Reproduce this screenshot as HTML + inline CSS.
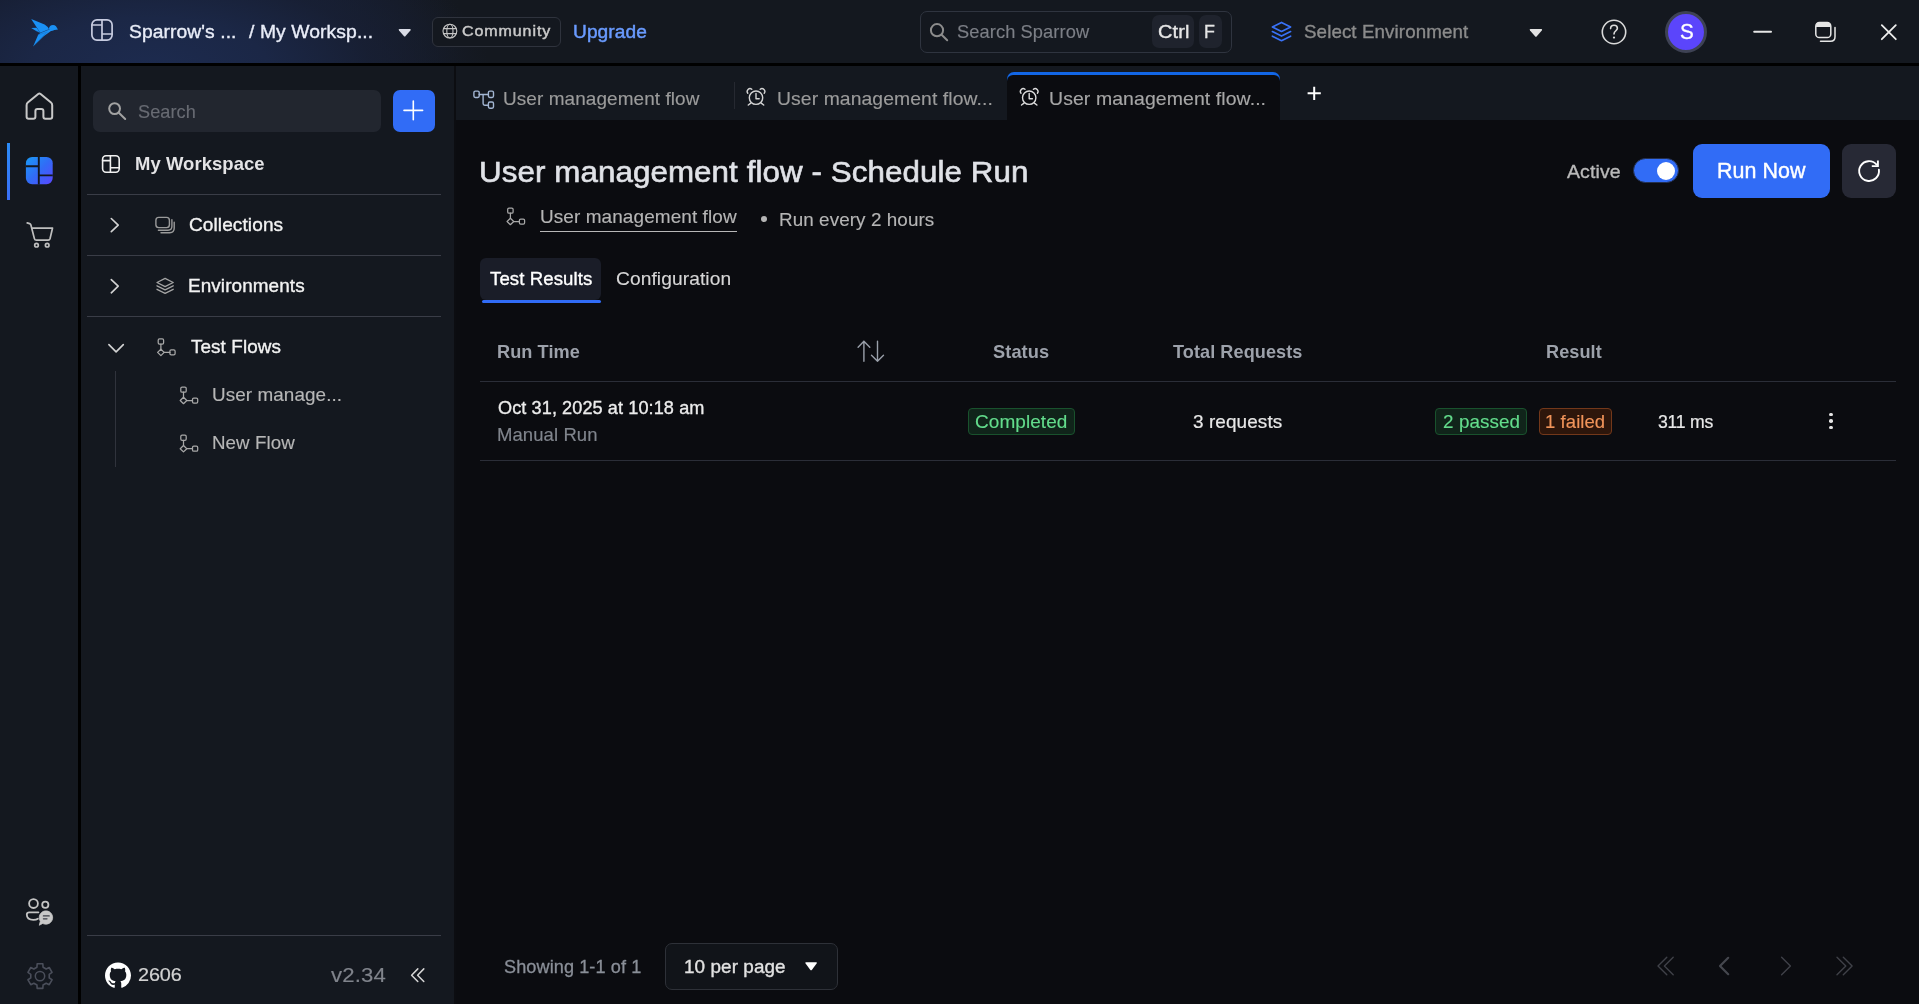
<!DOCTYPE html>
<html lang="en">
<head>
<meta charset="utf-8">
<title>Sparrow - User management flow - Schedule Run</title>
<style>
  html, body { margin: 0; padding: 0; }
  body {
    width: 1919px; height: 1004px; overflow: hidden; position: relative;
    background: #0b0c10;
    font-family: "Liberation Sans", sans-serif;
  }
  .abs { position: absolute; }
  .t {
    position: absolute; white-space: pre; line-height: 24px;
    font-family: "Liberation Sans", sans-serif; font-weight: 400;
  }
  svg { position: absolute; overflow: visible; }
  .ln { position: absolute; height: 1px; background: #3a3d47; }
</style>
</head>
<body>

<!-- ======= HEADER ======= -->
<div class="abs" id="header" style="left:0;top:0;width:1919px;height:63px;background:
  radial-gradient(ellipse 340px 150px at 150px 70px,#1d2b4f 0%,#1b2746 35%,rgba(24,32,54,0.75) 65%,rgba(20,24,31,0) 100%),
  linear-gradient(90deg,#151d33 0px,#161f36 120px,#161c2c 330px,#14181f 460px,#14181f 100%);"></div>
<div class="abs" style="left:0;top:63px;width:1919px;height:3px;background:#000"></div>

<!-- community badge -->
<div class="abs" style="left:432px;top:17px;width:127px;height:28px;border:1px solid #2f333d;border-radius:6px;background:#14181f"></div>
<!-- header search -->
<div class="abs" style="left:920px;top:11px;width:310px;height:40px;border:1px solid #2f343f;border-radius:7px;"></div>
<div class="abs" style="left:1152px;top:15px;width:42px;height:33px;border-radius:7px;background:#1f232d"></div>
<div class="abs" style="left:1199px;top:15px;width:23px;height:33px;border-radius:7px;background:#1f232d"></div>
<!-- avatar -->
<div class="abs" style="left:1665px;top:11px;width:36px;height:36px;border:3px solid #3e4254;border-radius:50%;background:#5b45fb"></div>

<!-- ======= LEFT NAV ======= -->
<div class="abs" id="nav" style="left:0;top:66px;width:78px;height:938px;background:#14181f"></div>
<div class="abs" style="left:78px;top:66px;width:3px;height:938px;background:#000"></div>
<div class="abs" style="left:7px;top:143px;width:3px;height:57px;background:linear-gradient(180deg,#2b8cf8,#3a6ff8)"></div>

<!-- ======= SIDEBAR ======= -->
<div class="abs" id="sidebar" style="left:81px;top:66px;width:373px;height:938px;background:#14181f"></div>
<div class="abs" style="left:454px;top:66px;width:2px;height:938px;background:#0c0d11"></div>
<div class="abs" style="left:93px;top:90px;width:288px;height:42px;border-radius:7px;background:#22262f"></div>
<div class="abs" style="left:393px;top:90px;width:42px;height:42px;border-radius:7px;background:#316cf6"></div>
<div class="ln" style="left:87px;top:194px;width:354px"></div>
<div class="ln" style="left:87px;top:255px;width:354px"></div>
<div class="ln" style="left:87px;top:316px;width:354px"></div>
<div class="ln" style="left:87px;top:935px;width:354px"></div>
<div class="abs" style="left:115px;top:371px;width:1px;height:96px;background:#30333c"></div>

<!-- ======= TAB BAR ======= -->
<div class="abs" id="tabbar" style="left:456px;top:66px;width:1463px;height:54px;background:#14181f"></div>
<div class="abs" style="left:734px;top:82px;width:1px;height:27px;background:#262931"></div>
<div class="abs" style="left:1007px;top:72px;width:273px;height:48px;border-radius:7px 7px 0 0;background:#1266e6"></div>
<div class="abs" style="left:1007px;top:75px;width:273px;height:45px;border-radius:6px 6px 0 0;background:#0b0c10"></div>

<!-- ======= MAIN ======= -->
<!-- sub-tabs -->
<div class="abs" style="left:480px;top:258px;width:121px;height:42px;border-radius:6px;background:#1a1d28"></div>
<div class="abs" style="left:482px;top:300px;width:119px;height:3px;border-radius:2px;background:#316cf6"></div>
<!-- underline of link -->
<div class="abs" style="left:540px;top:231px;width:197px;height:1px;background:#b8b8b8"></div>
<!-- bullet -->
<div class="abs" style="left:760.8px;top:215.9px;width:6px;height:6px;border-radius:50%;background:#b5b5b5"></div>
<!-- toggle -->
<div class="abs" style="left:1632.5px;top:158.3px;width:44px;height:23px;border:1px solid #24304f;border-radius:13px;background:#316cf6"></div>
<div class="abs" style="left:1657px;top:161.7px;width:18.4px;height:18.4px;border-radius:50%;background:#ffffff"></div>
<!-- run now -->
<div class="abs" style="left:1693px;top:144px;width:137px;height:54px;border-radius:9px;background:#316cf6"></div>
<div class="abs" style="left:1842px;top:144px;width:54px;height:54px;border-radius:9px;background:#272935"></div>

<!-- table lines -->
<div class="ln" style="left:480px;top:381px;width:1416px;background:#2b2e38"></div>
<div class="ln" style="left:480px;top:460px;width:1416px;background:#2b2e38"></div>
<!-- badges -->
<div class="abs" style="left:968px;top:408px;width:105px;height:25px;border:1px solid #19522d;border-radius:4px;background:#10241a"></div>
<div class="abs" style="left:1435px;top:408px;width:90px;height:25px;border:1px solid #19522d;border-radius:4px;background:#10241a"></div>
<div class="abs" style="left:1539px;top:408px;width:71px;height:25px;border:1px solid #73381a;border-radius:4px;background:#2d160b"></div>
<!-- kebab -->
<div class="abs" style="left:1829.3px;top:412.8px;width:3.6px;height:3.6px;border-radius:50%;background:#e6e6e6"></div>
<div class="abs" style="left:1829.3px;top:419.2px;width:3.6px;height:3.6px;border-radius:50%;background:#e6e6e6"></div>
<div class="abs" style="left:1829.3px;top:425.6px;width:3.6px;height:3.6px;border-radius:50%;background:#e6e6e6"></div>

<!-- footer dropdown -->
<div class="abs" style="left:665px;top:943px;width:171px;height:45px;border:1px solid #2e3138;border-radius:7px;background:#111419"></div>

<!--ICONS_START-->
<svg id="icons" width="1919" height="1004" viewBox="0 0 1919 1004" style="left:0;top:0" fill="none" stroke-linecap="round" stroke-linejoin="round">

<!-- ===== header: bird logo ===== -->
<g fill="#1a90f4" stroke="none">
  <path d="M31.2 19.1 L44.6 24.5 Q47.5 26.3 49.1 29.2 L40.2 32.7 Z"/>
  <path d="M31.2 28.0 L36.6 27.7 L40.2 32.8 L35.7 30.8 Z"/>
  <path d="M48.9 29.2 C48.9 26.4 50.8 24.9 53.0 24.9 C55.4 24.9 56.6 26.6 57.0 27.9 L58.0 29.4 L54.5 29.9 L51.0 30.7 Z"/>
  <path d="M55.0 29.8 L51.0 30.9 L44.0 35.9 L33.1 46.6 L38.2 34.8 L40.4 33.0 L49.1 29.4 Z"/>
</g>
<g stroke="#1568bd" stroke-width="0.5" opacity="0.75">
  <path d="M40.4 33.0 L49.1 29.4 M38.2 34.8 L47 32.2 M34.5 44.5 L45.5 33.6 M36.2 30.9 L40.2 32.8"/>
</g>

<!-- ===== header: workspace icon ===== -->
<g stroke="#c7cce0" stroke-width="1.7">
  <rect x="91.9" y="19.9" width="20.2" height="20.2" rx="5"/>
  <path d="M102 19.9 V40.1 M91.9 25 H102 M102 34 H112.1"/>
</g>
<!-- caret -->
<path d="M399.6 29 H409.8 Q411.4 29 410.4 30.4 L405.6 36 Q404.7 37 403.8 36 L399 30.4 Q398 29 399.6 29 Z" fill="#d9dce6" stroke="none"/>

<!-- globe -->
<g stroke="#c4c4c4" stroke-width="1.15">
  <circle cx="449.9" cy="31.1" r="6.9"/>
  <ellipse cx="449.9" cy="31.1" rx="3.1" ry="6.9"/>
  <path d="M443.6 28.6 H456.2 M443.6 33.6 H456.2"/>
</g>

<!-- header search icon -->
<g stroke="#8c8c8c" stroke-width="2">
  <circle cx="937" cy="30.2" r="6.1"/>
  <path d="M941.6 34.8 L947.2 40.2"/>
</g>

<!-- env layers (blue) -->
<g stroke="#3972f7" stroke-width="1.7">
  <path d="M1281.5 22.4 L1290.6 26.9 L1281.5 31.4 L1272.4 26.9 Z"/>
  <path d="M1272.4 31.6 L1281.5 36.1 L1290.6 31.6"/>
  <path d="M1272.4 36.2 L1281.5 40.7 L1290.6 36.2"/>
</g>
<!-- env caret -->
<path d="M1530.6 29 H1541.2 Q1542.8 29 1541.8 30.4 L1536.8 36.2 Q1535.9 37.2 1535 36.2 L1530 30.4 Q1529 29 1530.6 29 Z" fill="#e2e2e2" stroke="none"/>

<!-- help -->
<g stroke="#dadada" stroke-width="1.6">
  <circle cx="1614" cy="32" r="11.7"/>
  <path d="M1610.6 28.6 C1610.6 26.4 1612.2 25.2 1614 25.2 C1615.9 25.2 1617.4 26.5 1617.4 28.3 C1617.4 30.6 1614 31 1614 33.9"/>
</g>
<circle cx="1614" cy="37.6" r="1.1" fill="#dadada"/>

<!-- window controls -->
<path d="M1754.2 31.8 H1771" stroke="#e6e6e6" stroke-width="2"/>
<g stroke="#e6e6e6" stroke-width="1.5">
  <path d="M1820.5 41.2 H1830.5 Q1835 41.2 1835 36.7 V27.5"/>
  <rect x="1815.8" y="22.6" width="15" height="15" rx="3.6"/>
</g>
<path d="M1816 27 V26 Q1816 22.6 1819.4 22.6 H1827.2 Q1830.8 22.6 1830.8 26 V27 Z" fill="#e6e6e6" stroke="none"/>
<path d="M1881.8 25.2 L1895.8 39.2 M1895.8 25.2 L1881.8 39.2" stroke="#ededed" stroke-width="1.8"/>
<!-- ===== left nav ===== -->
<defs>
  <linearGradient id="wsg" x1="0" y1="0" x2="1" y2="1">
    <stop offset="0" stop-color="#1a9af6"/><stop offset="0.5" stop-color="#316cf6"/><stop offset="1" stop-color="#5a46ff"/>
  </linearGradient>
</defs>
<!-- home -->
<path d="M38.2 94.0 Q39.4 93.0 40.6 94.0 L51.0 102.6 Q52.2 103.6 52.2 105.2 V116.7 Q52.2 118.7 50.2 118.7 H45.4 Q43.4 118.7 43.4 116.7 V110.9 Q43.4 108.9 41.4 108.9 H37.4 Q35.4 108.9 35.4 110.9 V116.7 Q35.4 118.7 33.4 118.7 H28.6 Q26.6 118.7 26.6 116.7 V105.2 Q26.6 103.6 27.8 102.6 Z" stroke="#c8c8c8" stroke-width="2"/>
<!-- workspace (active) -->
<rect x="25.9" y="157" width="26.8" height="27.3" rx="6.2" fill="url(#wsg)" stroke="none"/>
<path d="M38.8 157 V184.4 M25.9 166.2 H38.8 M38.8 175.4 H52.8" stroke="#14181f" stroke-width="1.9" stroke-linecap="butt"/>
<!-- cart -->
<g stroke="#bebebe" stroke-width="1.7">
  <path d="M27.2 222.9 L29.6 223.6 Q30.6 223.9 30.9 225 L34.4 238.6 Q34.8 240.2 36.4 240.2 H48.2 Q49.6 240.2 50 238.8 L52.5 228.2 H31.7"/>
  <circle cx="36.5" cy="245.2" r="1.8"/>
  <circle cx="47.2" cy="245.2" r="1.8"/>
</g>
<!-- people + chat -->
<g stroke="#c4c4c4" stroke-width="1.8">
  <circle cx="33.5" cy="903.6" r="4.4"/>
  <circle cx="45.3" cy="904.8" r="3.1"/>
  <path d="M38.4 912.3 H29.4 Q26.8 912.3 26.8 914.6 Q26.8 919.9 33.4 919.9 Q36.4 919.9 37.9 918.8"/>
</g>
<path d="M39.4 924.9 L40.3 921.2 A6.7 6.7 0 1 1 43.0 923.6 Z" fill="#c8c8c8" stroke="#c8c8c8" stroke-width="0.8"/>
<path d="M43.4 915.9 H49.2 M43.4 918.8 H47.0" stroke="#3a3d45" stroke-width="1.3"/>
<!-- settings gear -->
<path d="M36.94 967.21 L37.17 963.82 L42.83 963.82 L43.06 967.21 L46.17 969.01 L49.22 967.51 L52.05 972.42 L49.23 974.31 L49.23 977.89 L52.05 979.78 L49.22 984.69 L46.17 983.19 L43.06 984.99 L42.83 988.38 L37.17 988.38 L36.94 984.99 L33.83 983.19 L30.78 984.69 L27.95 979.78 L30.77 977.89 L30.77 974.31 L27.95 972.42 L30.78 967.51 L33.83 969.01 Z" stroke="#4a4e5a" stroke-width="1.6"/>
<circle cx="40" cy="976.1" r="4.7" stroke="#4a4e5a" stroke-width="1.5"/>

<!-- ===== sidebar ===== -->
<!-- search icon -->
<g stroke="#a2a2a2" stroke-width="2">
  <circle cx="114.6" cy="108.6" r="5.4"/>
  <path d="M118.8 112.8 L125.2 119"/>
</g>
<!-- plus -->
<path d="M404 110.4 H422.6 M413.3 101.1 V119.7" stroke="#ffffff" stroke-width="1.6"/>
<!-- my workspace icon -->
<g stroke="#f0f0f0" stroke-width="1.6">
  <rect x="102.6" y="155.8" width="16.6" height="16.4" rx="3.4"/>
  <path d="M110.4 155.8 V172.2 M102.6 160.6 H110.4 M110.4 167.8 H119.2"/>
</g>
<!-- chevrons -->
<g stroke="#d2d2d2" stroke-width="1.65">
  <path d="M111.3 218.5 L118.2 225.1 L111.3 231.7"/>
  <path d="M111.3 279.6 L118.2 286.2 L111.3 292.8"/>
  <path d="M108.9 344.6 L116.1 351.8 L123.3 344.6"/>
</g>
<!-- collections icon -->
<g stroke="#9a9a9a" stroke-width="1.4">
  <rect x="155.9" y="217.4" width="13.5" height="10.2" rx="2.8"/>
  <path d="M158.4 230.2 H168.0 Q171.9 230.2 171.9 226.3 V219.6"/>
  <path d="M161 232.7 H169.8 Q174.2 232.7 174.2 228.3 V222.2"/>
</g>
<!-- environments icon -->
<g stroke="#a4a4a4" stroke-width="1.3">
  <path d="M165.1 278.4 L173.2 282.5 L165.1 286.6 L157 282.5 Z"/>
  <path d="M157 285.8 L165.1 289.9 L173.2 285.8"/>
  <path d="M157 289.3 L165.1 293.4 L173.2 289.3"/>
</g>
<!-- ===== flow icon (reused) ===== -->
<defs>
  <g id="flow" stroke-width="1.25">
    <rect x="0.9" y="0.6" width="5.4" height="5.2" rx="1.3"/>
    <path d="M3.6 5.8 V10.9"/>
    <path d="M3.6 10.9 L6.9 14.1 L3.6 17.3 L0.3 14.1 Z"/>
    <path d="M6.9 14.1 H12.6"/>
    <rect x="12.6" y="11.6" width="5.2" height="5" rx="1.3"/>
  </g>
  <g id="alarm" stroke-width="1.4">
    <circle cx="0" cy="0.2" r="6.7"/>
    <path d="M0 -4.1 V1.2 H3.2"/>
    <path d="M-8.2 -4.2 A2.85 2.85 0 0 1 -4.2 -8.2"/>
    <path d="M8.2 -4.2 A2.85 2.85 0 0 0 4.2 -8.2"/>
    <path d="M-5.2 5.6 L-7.7 7.5 M5.2 5.6 L7.7 7.5"/>
  </g>
</defs>
<use href="#flow" x="157.3" y="338.3" stroke="#a8a8a8"/>
<use href="#flow" x="179.9" y="386.4" stroke="#a8a8a8"/>
<use href="#flow" x="179.9" y="434.6" stroke="#a8a8a8"/>
<use href="#flow" x="506.8" y="207.4" stroke="#a8a8a8"/>

<!-- github mark -->
<g transform="translate(105 962.5) scale(1.625)">
  <path fill="#ffffff" stroke="none" d="M8 0C3.58 0 0 3.58 0 8c0 3.54 2.29 6.53 5.47 7.59.4.07.55-.17.55-.38 0-.19-.01-.82-.01-1.49-2.01.37-2.53-.49-2.69-.94-.09-.23-.48-.94-.82-1.13-.28-.15-.68-.52-.01-.53.63-.01 1.08.58 1.23.82.72 1.21 1.87.87 2.33.66.07-.52.28-.87.51-1.07-1.78-.2-3.64-.89-3.64-3.95 0-.87.31-1.59.82-2.15-.08-.2-.36-1.02.08-2.12 0 0 .67-.21 2.2.82.64-.18 1.32-.27 2-.27.68 0 1.36.09 2 .27 1.53-1.04 2.2-.82 2.2-.82.44 1.1.16 1.92.08 2.12.51.56.82 1.27.82 2.15 0 3.07-1.87 3.75-3.65 3.95.29.25.54.73.54 1.48 0 1.07-.01 1.93-.01 2.2 0 .21.15.46.55.38A8.013 8.013 0 0016 8c0-4.42-3.58-8-8-8z"/>
</g>
<!-- collapse « -->
<g stroke="#d6d6d6" stroke-width="1.5">
  <path d="M417.8 968.9 L411.6 975.2 L417.8 981.5"/>
  <path d="M423.8 968.9 L417.6 975.2 L423.8 981.5"/>
</g>

<!-- ===== tab bar icons ===== -->
<g stroke="#a3b6d3" stroke-width="1.4">
  <rect x="473.9" y="91.1" width="5.3" height="6.4" rx="1.4"/>
  <rect x="488.4" y="91.1" width="5.1" height="6.4" rx="1.4"/>
  <rect x="488.4" y="102.0" width="5.1" height="6.2" rx="1.4"/>
  <path d="M479.2 94.5 H488.4 M483.1 94.5 V103.6 Q483.1 105.2 484.7 105.2 H488.4"/>
</g>
<use href="#alarm" x="756" y="97.5" stroke="#d4d4d4"/>
<use href="#alarm" x="1029.2" y="97.5" stroke="#dcdcdc"/>
<path d="M1307.6 93.3 H1320.8 M1314.2 86.7 V99.9" stroke="#ffffff" stroke-width="2" stroke-linecap="butt"/>

<!-- ===== main ===== -->
<!-- refresh -->
<g stroke="#ffffff" stroke-width="1.9">
  <path d="M1878.9 169.7 A9.9 9.9 0 1 1 1876.6 164.6"/>
  <path d="M1871.8 166.1 H1877.9 V160.4" stroke-linejoin="miter" stroke-linecap="butt"/>
</g>
<!-- sort -->
<g stroke="#9aa0aa" stroke-width="1.4">
  <path d="M863.9 361.2 V341.3 M858.1 347.2 L863.9 341.3 L869.8 347.2"/>
  <path d="M877.5 341.3 V361.2 M871.5 355.3 L877.5 361.2 L883.5 355.3"/>
</g>
<!-- footer caret -->
<path d="M806.2 962.2 H816 Q817.6 962.2 816.6 963.6 L812 969.8 Q811.1 970.9 810.2 969.8 L805.6 963.6 Q804.6 962.2 806.2 962.2 Z" fill="#ffffff" stroke="none"/>
<!-- pagination -->
<g stroke="#3f4148" stroke-width="1.4">
  <path d="M1666.8 957.2 L1658 966 L1666.8 974.8"/>
  <path d="M1673.2 957.2 L1664.4 966 L1673.2 974.8"/>
  <path d="M1781.6 957.2 L1790.4 966 L1781.6 974.8"/>
  <path d="M1837 957.2 L1845.8 966 L1837 974.8"/>
  <path d="M1843.3 957.2 L1852.1 966 L1843.3 974.8"/>
</g>
<path d="M1728.2 957.8 L1720 966 L1728.2 974.2" stroke="#45474e" stroke-width="2.2"/>
</svg>

<!--ICONS_END-->

<div id="txt" style="position:absolute;left:0;top:0;width:1919px;height:1004px;will-change:transform">
<span class="t" id="h_org" style="left:129.00px;top:19.70px;font-size:18.4px;color:#e9edf8;letter-spacing:0.080px;-webkit-text-stroke:0.35px #e9edf8;transform:scaleX(1.0475);transform-origin:0 0;">Sparrow&#x27;s ...</span>
<span class="t" id="h_ws" style="left:249.00px;top:19.70px;font-size:18.4px;color:#e9edf8;letter-spacing:0.080px;-webkit-text-stroke:0.35px #e9edf8;transform:scaleX(1.0504);transform-origin:0 0;">/ My Worksp...</span>
<span class="t" id="h_comm" style="left:462.00px;top:18.80px;font-size:14.3px;color:#c9c9c9;letter-spacing:0.812px;-webkit-text-stroke:0.45px #c9c9c9;transform:scaleX(1.12);transform-origin:0 0;">Community</span>
<span class="t" id="h_upg" style="left:572.74px;top:19.80px;font-size:18.0px;color:#6a9bff;letter-spacing:0.080px;-webkit-text-stroke:0.45px #6a9bff;transform:scaleX(1.0625);transform-origin:0 0;">Upgrade</span>
<span class="t" id="h_srch" style="left:957.00px;top:19.70px;font-size:18.4px;color:#7c7f86;letter-spacing:0.080px;-webkit-text-stroke:0.15px #7c7f86;transform:scaleX(0.9939);transform-origin:0 0;">Search Sparrow</span>
<span class="t" id="h_ctrl" style="left:1158.00px;top:19.70px;font-size:18.4px;color:#e6e6e6;letter-spacing:0.080px;-webkit-text-stroke:0.35px #e6e6e6;transform:scaleX(1.0881);transform-origin:0 0;">Ctrl</span>
<span class="t" id="h_f" style="left:1204.03px;top:19.70px;font-size:18.4px;color:#e6e6e6;-webkit-text-stroke:0.35px #e6e6e6;transform:scaleX(0.97);transform-origin:0 0;">F</span>
<span class="t" id="h_env" style="left:1303.75px;top:19.70px;font-size:18.4px;color:#8b8b8b;letter-spacing:0.080px;-webkit-text-stroke:0.35px #8b8b8b;transform:scaleX(1.0208);transform-origin:0 0;">Select Environment</span>
<span class="t" id="h_s" style="left:1679.80px;top:20.30px;font-size:21.5px;color:#ffffff;-webkit-text-stroke:0.3px #ffffff;transform:scaleX(0.96);transform-origin:0 0;">S</span>
<span class="t" id="s_srch" style="left:138.40px;top:100.00px;font-size:18.4px;color:#686b73;letter-spacing:0.080px;-webkit-text-stroke:0.15px #686b73;transform:scaleX(0.9856);transform-origin:0 0;">Search</span>
<span class="t" id="s_myws" style="left:134.60px;top:152.40px;font-size:18.4px;color:#e4e4e6;letter-spacing:0.079px;font-weight:700;transform:scaleX(1.0024);transform-origin:0 0;">My Workspace</span>
<span class="t" id="s_coll" style="left:189.40px;top:213.30px;font-size:18.4px;color:#f2f2f2;letter-spacing:0.080px;-webkit-text-stroke:0.35px #f2f2f2;transform:scaleX(1.0369);transform-origin:0 0;">Collections</span>
<span class="t" id="s_env" style="left:188.37px;top:274.30px;font-size:18.4px;color:#f2f2f2;letter-spacing:0.080px;-webkit-text-stroke:0.35px #f2f2f2;transform:scaleX(1.0292);transform-origin:0 0;">Environments</span>
<span class="t" id="s_tf" style="left:191.30px;top:335.40px;font-size:18.4px;color:#f2f2f2;letter-spacing:0.080px;-webkit-text-stroke:0.35px #f2f2f2;transform:scaleX(1.0265);transform-origin:0 0;">Test Flows</span>
<span class="t" id="s_um" style="left:212.47px;top:383.20px;font-size:18.4px;color:#b6b6b6;letter-spacing:0.080px;-webkit-text-stroke:0.15px #b6b6b6;transform:scaleX(1.026);transform-origin:0 0;">User manage...</span>
<span class="t" id="s_nf" style="left:212.48px;top:431.10px;font-size:18.4px;color:#b6b6b6;letter-spacing:0.080px;-webkit-text-stroke:0.15px #b6b6b6;transform:scaleX(1.0184);transform-origin:0 0;">New Flow</span>
<span class="t" id="s_gh" style="left:138.40px;top:963.00px;font-size:18.2px;color:#d2d2d2;letter-spacing:-0.084px;-webkit-text-stroke:0.2px #d2d2d2;transform:scaleX(1.09);transform-origin:0 0;">2606</span>
<span class="t" id="s_ver" style="left:331.30px;top:962.90px;font-size:19.8px;color:#80848c;letter-spacing:0.113px;-webkit-text-stroke:0.15px #80848c;transform:scaleX(1.12);transform-origin:0 0;">v2.34</span>
<span class="t" id="t_1" style="left:503.37px;top:87.00px;font-size:18.4px;color:#9b9b9b;letter-spacing:0.080px;-webkit-text-stroke:0.15px #9b9b9b;transform:scaleX(1.0303);transform-origin:0 0;">User management flow</span>
<span class="t" id="t_2" style="left:776.65px;top:87.00px;font-size:18.4px;color:#9b9b9b;letter-spacing:0.080px;-webkit-text-stroke:0.15px #9b9b9b;transform:scaleX(1.0519);transform-origin:0 0;">User management flow...</span>
<span class="t" id="t_3" style="left:1049.14px;top:87.00px;font-size:18.4px;color:#a6a6a6;letter-spacing:0.080px;-webkit-text-stroke:0.15px #a6a6a6;transform:scaleX(1.0578);transform-origin:0 0;">User management flow...</span>
<span class="t" id="m_title" style="left:478.90px;top:159.80px;font-size:29.9px;color:#e0e2e7;letter-spacing:0.079px;-webkit-text-stroke:0.6px #e0e2e7;transform:scaleX(1.0477);transform-origin:0 0;">User management flow - Schedule Run</span>
<span class="t" id="m_sub1" style="left:539.57px;top:204.70px;font-size:18.4px;color:#b5b5b5;letter-spacing:0.080px;-webkit-text-stroke:0.15px #b5b5b5;transform:scaleX(1.0313);transform-origin:0 0;">User management flow</span>
<span class="t" id="m_sub2" style="left:778.98px;top:207.90px;font-size:18.4px;color:#b5b5b5;letter-spacing:0.080px;-webkit-text-stroke:0.15px #b5b5b5;transform:scaleX(1.0243);transform-origin:0 0;">Run every 2 hours</span>
<span class="t" id="m_tr" style="left:489.50px;top:267.30px;font-size:18.4px;color:#ffffff;letter-spacing:0.080px;-webkit-text-stroke:0.35px #ffffff;transform:scaleX(1.0125);transform-origin:0 0;">Test Results</span>
<span class="t" id="m_cfg" style="left:616.40px;top:267.30px;font-size:18.4px;color:#d6d6d6;letter-spacing:0.080px;-webkit-text-stroke:0.15px #d6d6d6;transform:scaleX(1.0429);transform-origin:0 0;">Configuration</span>
<span class="t" id="m_act" style="left:1566.60px;top:159.90px;font-size:18.4px;color:#b9b9b9;letter-spacing:0.080px;-webkit-text-stroke:0.35px #b9b9b9;transform:scaleX(1.0626);transform-origin:0 0;">Active</span>
<span class="t" id="m_run" style="left:1716.69px;top:158.80px;font-size:21.3px;color:#ffffff;letter-spacing:0.080px;-webkit-text-stroke:0.4px #ffffff;transform:scaleX(1.0058);transform-origin:0 0;">Run Now</span>
<span class="t" id="th_rt" style="left:497.30px;top:340.10px;font-size:18.2px;color:#9da2ab;letter-spacing:0.080px;font-weight:700;transform:scaleX(0.9967);transform-origin:0 0;">Run Time</span>
<span class="t" id="th_st" style="left:993.10px;top:340.10px;font-size:18.2px;color:#9da2ab;letter-spacing:0.081px;font-weight:700;transform:scaleX(1.0023);transform-origin:0 0;">Status</span>
<span class="t" id="th_tr" style="left:1173.10px;top:340.10px;font-size:18.2px;color:#9da2ab;letter-spacing:0.080px;font-weight:700;transform:scaleX(0.9943);transform-origin:0 0;">Total Requests</span>
<span class="t" id="th_rs" style="left:1546.30px;top:340.10px;font-size:18.2px;color:#9da2ab;letter-spacing:0.080px;font-weight:700;transform:scaleX(0.9959);transform-origin:0 0;">Result</span>
<span class="t" id="r_dt" style="left:498.30px;top:396.10px;font-size:18.4px;color:#ececec;letter-spacing:0.080px;-webkit-text-stroke:0.35px #ececec;transform:scaleX(0.9858);transform-origin:0 0;">Oct 31, 2025 at 10:18 am</span>
<span class="t" id="r_mr" style="left:497.29px;top:423.25px;font-size:18.4px;color:#80858d;letter-spacing:0.080px;-webkit-text-stroke:0.15px #80858d;transform:scaleX(1.0065);transform-origin:0 0;">Manual Run</span>
<span class="t" id="r_cmp" style="left:975.20px;top:410.10px;font-size:18.4px;color:#63dc8c;letter-spacing:0.080px;-webkit-text-stroke:0.15px #63dc8c;transform:scaleX(1.0308);transform-origin:0 0;">Completed</span>
<span class="t" id="r_req" style="left:1193.00px;top:410.10px;font-size:18.4px;color:#e8e8e8;letter-spacing:0.080px;-webkit-text-stroke:0.2px #e8e8e8;transform:scaleX(1.0301);transform-origin:0 0;">3 requests</span>
<span class="t" id="r_pass" style="left:1442.70px;top:410.10px;font-size:18.4px;color:#63dc8c;letter-spacing:0.080px;-webkit-text-stroke:0.15px #63dc8c;transform:scaleX(1.0244);transform-origin:0 0;">2 passed</span>
<span class="t" id="r_fail" style="left:1544.80px;top:410.10px;font-size:18.4px;color:#f0945a;letter-spacing:0.080px;-webkit-text-stroke:0.15px #f0945a;transform:scaleX(1.0045);transform-origin:0 0;">1 failed</span>
<span class="t" id="r_ms" style="left:1658.30px;top:410.10px;font-size:18.4px;color:#e8e8e8;letter-spacing:-0.270px;-webkit-text-stroke:0.2px #e8e8e8;transform:scaleX(0.96);transform-origin:0 0;">311 ms</span>
<span class="t" id="f_show" style="left:504.40px;top:955.20px;font-size:18.4px;color:#8a8f98;letter-spacing:0.080px;-webkit-text-stroke:0.3px #8a8f98;transform:scaleX(0.9857);transform-origin:0 0;">Showing 1-1 of 1</span>
<span class="t" id="f_pp" style="left:683.67px;top:955.20px;font-size:18.4px;color:#e2e2e2;letter-spacing:0.080px;-webkit-text-stroke:0.35px #e2e2e2;transform:scaleX(1.0262);transform-origin:0 0;">10 per page</span>
</div>

</body>
</html>
